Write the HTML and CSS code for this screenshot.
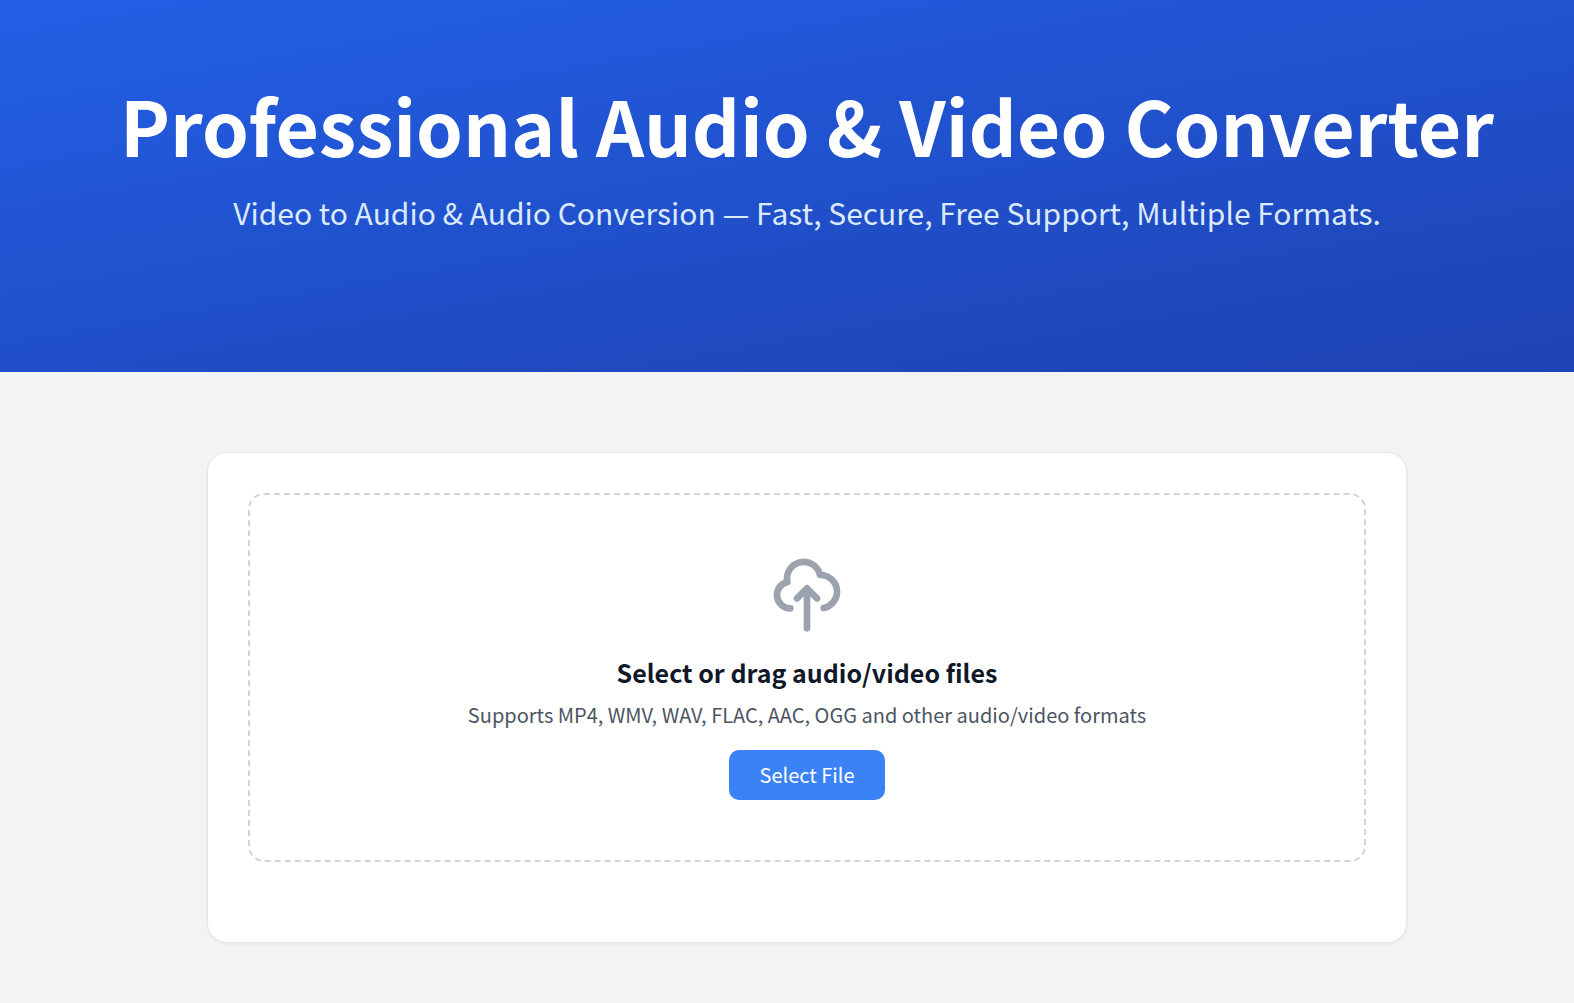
FILE: index.html
```html
<!DOCTYPE html>
<html lang="en">
<head>
<meta charset="utf-8">
<meta name="viewport" content="width=device-width, initial-scale=1">
<title>Professional Audio &amp; Video Converter</title>
<link rel="stylesheet" href="styles.css">
</head>
<body>
<header class="hero">
  <h1 class="hero-title">Professional Audio &amp; Video Converter</h1>
  <p class="hero-subtitle">Video to Audio &amp; Audio Conversion — Fast, Secure, Free Support, Multiple Formats.</p>
</header>
<main class="content">
  <section class="card">
    <div class="dropzone">
      <svg class="upload-icon" viewBox="0 0 24 24" fill="none" stroke="currentColor" stroke-width="2" stroke-linecap="round" stroke-linejoin="round" aria-hidden="true">
        <path d="M7 16a4 4 0 01-.88-7.903A5 5 0 1115.9 6L16 6a5 5 0 011 9.9M15 13l-3-3m0 0l-3 3m3-3v12"/>
      </svg>
      <h2 class="dropzone-title">Select or drag audio/video files</h2>
      <p class="dropzone-text">Supports MP4, WMV, WAV, FLAC, AAC, OGG and other audio/video formats</p>
      <button class="select-button" type="button">Select File</button>
    </div>
  </section>
</main>
</body>
</html>
```
FILE: styles.css
```css
* {
  box-sizing: border-box;
}

body {
  margin: 0;
  min-height: 100vh;
  background: #f1f3f5;
  color: #111827;
  font-family: "Noto Sans CJK SC", "Noto Sans", sans-serif;
}

.hero {
  padding: 80px 0 140px 40px;
  background: linear-gradient(170deg, #235fe6, #1e42b2);
  text-align: center;
}

.hero-title {
  margin: 0 0 22px;
  color: #fff;
  font-size: 75px;
  font-weight: 700;
  line-height: 90px;
}

.hero-subtitle {
  margin: 0;
  color: #dbeafe;
  font-size: 30px;
  line-height: 40px;
}

.content {
  padding: 80px 0 60px 40px;
}

.card {
  max-width: 1200px;
  margin: 0 auto;
  padding: 40px 40px 80px;
  border: 1px solid #e5e7eb;
  border-radius: 20px;
  background: #fff;
  box-shadow: 0 1px 3px rgba(0, 0, 0, 0.06);
}

.dropzone {
  display: flex;
  flex-direction: column;
  align-items: center;
  padding: 60px;
  border: 2px dashed #d1d3d6;
  border-radius: 16px;
  text-align: center;
}

.upload-icon {
  width: 80px;
  height: 80px;
  margin-bottom: 20px;
  color: #9ca3af;
}

.dropzone-title {
  margin: 0 0 10px;
  font-size: 25px;
  font-weight: 700;
  line-height: 35px;
}

.dropzone-text {
  margin: 0 0 20px;
  color: #4b5563;
  font-size: 20px;
  line-height: 30px;
}

.select-button {
  padding: 10px 30px;
  border: 0;
  border-radius: 10px;
  background: #3b82f6;
  color: #fff;
  font-family: inherit;
  font-size: 20px;
  line-height: 30px;
  cursor: pointer;
}
```
